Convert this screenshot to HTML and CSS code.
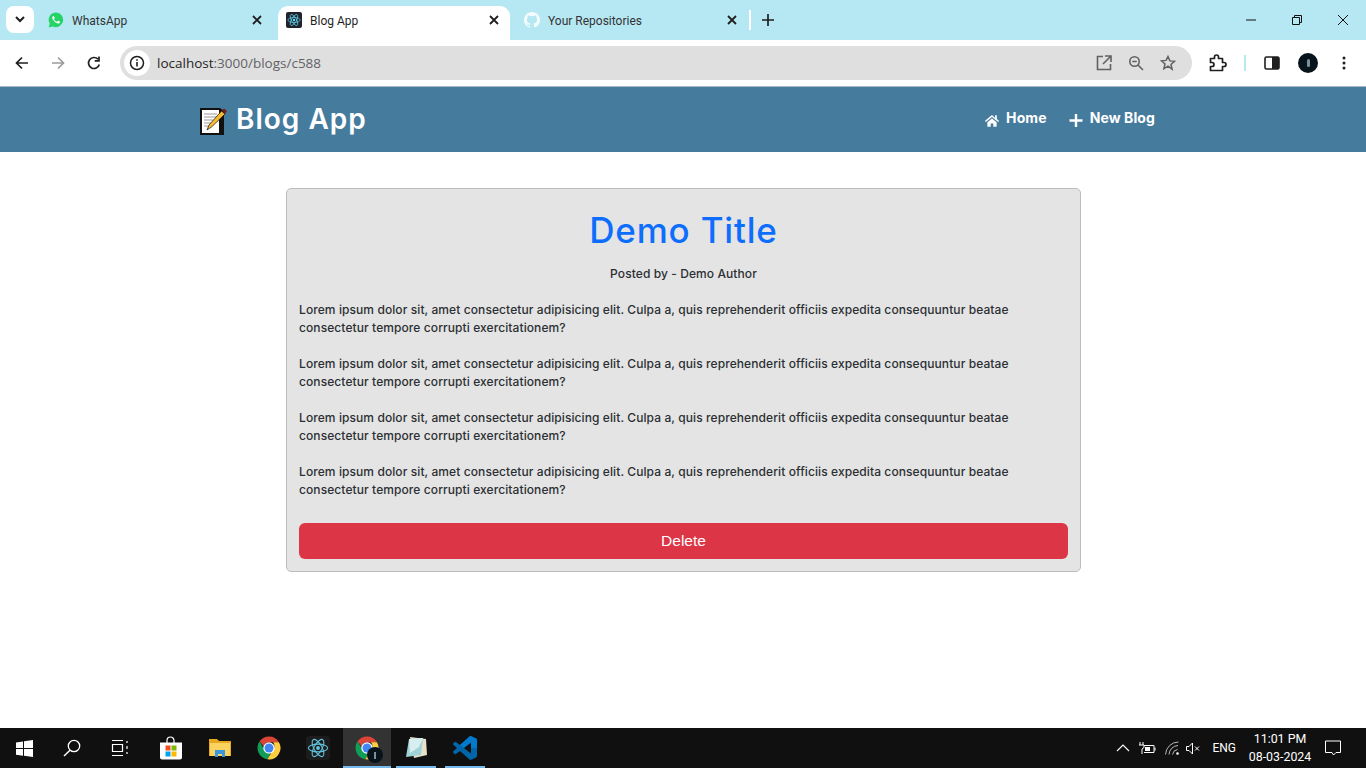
FILE: index.html
```html
<!DOCTYPE html>
<html lang="en">
<head>
    <meta charset="UTF-8">
    <title>Blog App</title>
    <link rel="stylesheet" href="styles.css">
</head>
<body>
    <svg class="defs" width="0" height="0">
        <symbol id="chrome" viewBox="0 0 48 48">
            <path fill="#db4437" d="M24 1a23 23 0 0 1 19.9 11.5H24a11.500 11.500 0 0 0-11 8L5.200 10.700A23 23 0 0 1 24 1z"/>
            <path fill="#0f9d58" d="M5.200 10.700 15.200 28a11.500 11.500 0 0 0 11.800 7.100L20.600 46.700A23 23 0 0 1 5.200 10.700z"/>
            <path fill="#ffcd40" d="M43.900 12.500A23 23 0 0 1 20.600 46.700L32 28a11.500 11.500 0 0 0 0-15.500z"/>
            <circle cx="24" cy="24" r="11.500" fill="#fff"/>
            <circle cx="24" cy="24" r="9" fill="#4285f4"/>
        </symbol>
        <symbol id="react" viewBox="0 0 48 48">
            <g fill="none" stroke="currentColor" stroke-width="2.400">
                <ellipse cx="24" cy="24" rx="21" ry="8.500"/>
                <ellipse cx="24" cy="24" rx="21" ry="8.500" transform="rotate(60 24 24)"/>
                <ellipse cx="24" cy="24" rx="21" ry="8.500" transform="rotate(120 24 24)"/>
            </g>
            <circle cx="24" cy="24" r="4.200" fill="currentColor"/>
        </symbol>
        <symbol id="close" viewBox="0 0 10 10">
            <path d="M1 1l8 8M9 1l-8 8" fill="none" stroke="currentColor" stroke-width="1.800"/>
        </symbol>
    </svg>

    <div class="tabstrip">
        <div class="tab-search">
            <svg width="10" height="7" viewBox="0 0 10 7"><path d="M1 1l4 4 4-4" fill="none" stroke="#1f1f1f" stroke-width="2"/></svg>
        </div>
        <div class="tab">
            <svg class="favicon" viewBox="0 0 16 16">
                <path fill="#25d366" d="M8 .5a7.300 7.300 0 0 0-6.300 11L.7 15.400l4-1A7.300 7.300 0 1 0 8 .5z"/>
                <path fill="#fff" d="M5.500 3.900c-.3 0-.9.300-1.100 1-.3 1 .1 2.300 1.200 3.700 1.300 1.600 2.700 2.500 4.200 2.900 1 .2 1.900-.3 2.100-1.200.1-.3.100-.6 0-.7l-1.800-.9c-.2-.1-.3 0-.4.100l-.7.900c-.1.100-.3.100-.4 0-1.100-.5-2-1.300-2.600-2.400-.1-.2 0-.3.100-.4l.5-.7v-.4l-.7-1.700c-.1-.2-.2-.2-.4-.2z"/>
            </svg>
            <span class="tab-title">WhatsApp</span>
            <svg class="tab-close"><use href="#close"/></svg>
        </div>
        <div class="tab tab-active">
            <span class="favicon react-box"><svg width="14" height="14"><use href="#react"/></svg></span>
            <span class="tab-title">Blog App</span>
            <svg class="tab-close"><use href="#close"/></svg>
        </div>
        <div class="tab tab-last">
            <svg class="favicon" viewBox="0 0 16 16">
                <path fill="#f4fbfd" d="M8 0C3.580 0 0 3.580 0 8c0 3.540 2.290 6.530 5.470 7.590.4.070.55-.17.55-.38v-1.340c-2.230.48-2.700-1.070-2.700-1.070-.36-.92-.89-1.170-.89-1.170-.73-.5.050-.49.050-.49.800.060 1.230.83 1.230.83.710 1.220 1.870.87 2.330.66.070-.52.280-.87.510-1.070-1.780-.2-3.640-.89-3.640-3.950 0-.87.310-1.590.82-2.150-.080-.2-.36-1.020.080-2.120 0 0 .67-.21 2.200.82a7.600 7.600 0 0 1 4 0c1.530-1.040 2.200-.82 2.200-.82.440 1.100.160 1.920.080 2.120.51.560.82 1.270.82 2.150 0 3.070-1.870 3.750-3.650 3.950.29.250.54.730.54 1.480v2.200c0 .21.150.46.550.38A8 8 0 0 0 16 8c0-4.420-3.580-8-8-8z"/>
            </svg>
            <span class="tab-title">Your Repositories</span>
            <svg class="tab-close"><use href="#close"/></svg>
        </div>
        <div class="tab-new">
            <svg width="12" height="12" viewBox="0 0 12 12"><path d="M6 0v12M0 6h12" fill="none" stroke="#1f1f1f" stroke-width="1.700"/></svg>
        </div>
        <div class="window-controls">
            <svg width="10" height="10" viewBox="0 0 10 10"><path d="M0 5h10" stroke="#111" fill="none"/></svg>
            <svg width="10" height="10" viewBox="0 0 10 10"><path d="M.5 2.500h7v7h-7zM2.500 2.500v-2h7v7h-2" stroke="#111" fill="none"/></svg>
            <svg width="10" height="10" viewBox="0 0 10 10"><path d="M0 0l10 10M10 0L0 10" stroke="#111" fill="none"/></svg>
        </div>
    </div>

    <div class="toolbar">
        <svg class="tool-btn" viewBox="0 0 16 16"><path d="M14 8H3M8 2.500 2.500 8 8 13.500" fill="none" stroke="#1f1f1f" stroke-width="1.700"/></svg>
        <svg class="tool-btn" viewBox="0 0 16 16"><path d="M2 8h11M8 2.500 13.500 8 8 13.500" fill="none" stroke="#9c9c9c" stroke-width="1.700"/></svg>
        <svg class="tool-btn" viewBox="0 0 16 16"><path d="M13.300 9.500A5.500 5.500 0 1 1 12 4.200M13 1.500v4.300H8.700" fill="none" stroke="#1f1f1f" stroke-width="1.700"/></svg>
        <div class="omnibox">
            <span class="site-info">
                <svg width="16" height="16" viewBox="0 0 16 16"><circle cx="8" cy="8" r="6.500" fill="none" stroke="#1f1f1f" stroke-width="1.500"/><path d="M8 7v4.500M8 4.300v1.500" stroke="#1f1f1f" stroke-width="1.600"/></svg>
            </span>
            <span class="url">localhost<span class="url-rest">:3000/blogs/c588</span></span>
            <span class="omni-actions">
                <svg width="16" height="16" viewBox="0 0 16 16"><path d="M7 1.500H1.500v13h13V9M9 1h6v6M15 1 7 9" fill="none" stroke="#616161" stroke-width="1.600"/></svg>
                <svg width="16" height="16" viewBox="0 0 16 16"><circle cx="6.500" cy="6.500" r="4.700" fill="none" stroke="#616161" stroke-width="1.600"/><path d="M10 10l5 5M4.300 6.500h4.400" stroke="#616161" stroke-width="1.600"/></svg>
                <svg width="16" height="16" viewBox="0 0 16 16"><path d="M8 1.500l1.900 4.400 4.700.4-3.600 3.100 1.100 4.700L8 11.100l-4.100 2.500L5 8.900 1.400 5.800l4.700-.4z" fill="none" stroke="#616161" stroke-width="1.500"/></svg>
            </span>
        </div>
        <svg class="ext-icon" width="18" height="18" viewBox="0 0 18 18"><path d="M1.500 4.500h4V3a2 2 0 0 1 4 0v1.500h4v4H15a2 2 0 0 1 0 4h-1.500v4h-12v-4H3a1.700 1.700 0 0 0 0-4H1.500z" fill="none" stroke="#1f1f1f" stroke-width="1.700" stroke-linejoin="round"/></svg>
        <span class="tool-sep"></span>
        <svg class="panel-icon" width="16" height="16" viewBox="0 0 16 16"><rect x="1" y="2" width="14" height="12" rx="1.500" fill="none" stroke="#1f1f1f" stroke-width="1.600"/><rect x="8" y="2" width="7" height="12" fill="#1f1f1f"/></svg>
        <span class="avatar"><span class="avatar-mark"></span></span>
        <svg class="dots" width="4" height="14" viewBox="0 0 4 14"><circle cx="2" cy="2" r="1.500"/><circle cx="2" cy="7" r="1.500"/><circle cx="2" cy="12" r="1.500"/></svg>
    </div>

    <nav class="navbar">
        <div class="brand">
            <svg width="30" height="30" viewBox="0 0 30 30">
                <path d="M2 3h20l4 3v24H2z" fill="#111"/>
                <path d="M4 5h17v23H4z" fill="#fff"/>
                <path d="M6 9h13M6 12h13M6 15h9M6 18h7M6 21h5" stroke="#9a9a9a" stroke-width="1.200"/>
                <path d="M9 25l2-5L23.500 6l3.500 3L13.500 22z" fill="#f5b932" stroke="#111" stroke-width=".7"/>
                <path d="M24 5l2-1.500 3 2.500-2 3z" fill="#7a1f1f"/>
            </svg>
            <span class="brand-name">Blog App</span>
        </div>
        <div class="nav-links">
            <a class="nav-link" href="#">
                <svg class="nav-icon" viewBox="0 0 16 14"><path fill="#fff" d="M8 .7 0 7.400l1 1.200L8 3l7 5.600 1-1.200-2.500-2V1h-2v3zM2.700 9 8 4.600 13.300 9v5H9.500v-3.500h-3V14H2.700z"/></svg>
                <span class="nav-text">Home</span>
            </a>
            <a class="nav-link" href="#">
                <svg class="nav-icon" viewBox="0 0 14 14"><path d="M7 0v14M0 7h14" stroke="#fff" stroke-width="2.600" fill="none"/></svg>
                <span class="nav-text">New Blog</span>
            </a>
        </div>
    </nav>

    <main class="page">
        <article class="card">
            <h1 class="card-title">Demo Title</h1>
            <p class="card-author">Posted by - Demo Author</p>
            <div class="card-body">
                <p>Lorem ipsum dolor sit, amet consectetur adipisicing elit. Culpa a, quis reprehenderit officiis expedita consequuntur beatae consectetur tempore corrupti exercitationem?</p>
                <p>Lorem ipsum dolor sit, amet consectetur adipisicing elit. Culpa a, quis reprehenderit officiis expedita consequuntur beatae consectetur tempore corrupti exercitationem?</p>
                <p>Lorem ipsum dolor sit, amet consectetur adipisicing elit. Culpa a, quis reprehenderit officiis expedita consequuntur beatae consectetur tempore corrupti exercitationem?</p>
                <p>Lorem ipsum dolor sit, amet consectetur adipisicing elit. Culpa a, quis reprehenderit officiis expedita consequuntur beatae consectetur tempore corrupti exercitationem?</p>
            </div>
            <button class="delete-btn">Delete</button>
        </article>
    </main>

    <footer class="taskbar">
        <div class="task-slot">
            <svg width="17" height="17" viewBox="0 0 17 17"><path fill="#fff" d="M0 2.400 7 1.400v6.700H0zM8 1.300 17 0v8.100H8zM0 9h7v6.700L0 14.700zM8 9h9v8l-9-1.300z"/></svg>
        </div>
        <div class="task-slot">
            <svg width="18" height="18" viewBox="0 0 18 18"><circle cx="11" cy="7" r="5.700" fill="none" stroke="#fff" stroke-width="1.300"/><path d="M7 11.200 1 17" stroke="#fff" stroke-width="1.500"/></svg>
        </div>
        <div class="task-slot">
            <svg width="18" height="16" viewBox="0 0 18 16"><path d="M1 .5h11M1 15.500h11M1.500 4.500h10v7h-10zM16 1v2M16 6v3M16 12v2" fill="none" stroke="#fff" stroke-width="1.200"/></svg>
        </div>
        <div class="task-slot task-first">
            <svg width="24" height="24" viewBox="0 0 24 24">
                <path d="M8 7V4.500a3.500 3.500 0 0 1 7 0V7" fill="none" stroke="#fff" stroke-width="1.200"/>
                <path d="M1 6.500h22v15a2 2 0 0 1-2 2H3a2 2 0 0 1-2-2z" fill="#fff"/>
                <rect x="6.500" y="9.500" width="5" height="5" fill="#f25022"/>
                <rect x="12.500" y="9.500" width="5" height="5" fill="#7fba00"/>
                <rect x="6.500" y="15.500" width="5" height="5" fill="#00a4ef"/>
                <rect x="12.500" y="15.500" width="5" height="5" fill="#ffb900"/>
            </svg>
        </div>
        <div class="task-slot">
            <svg width="22" height="20" viewBox="0 0 22 20">
                <path d="M0 1h8l2 2h12v15H0z" fill="#e8a820"/>
                <path d="M1 5h20v13H1z" fill="#fbd35f"/>
                <path d="M6 19v-7h10v7h-3v-3H9v3z" fill="#3a96dd"/>
            </svg>
        </div>
        <div class="task-slot"><svg width="24" height="24"><use href="#chrome"/></svg></div>
        <div class="task-slot">
            <span class="react-tile"><svg width="22" height="22"><use href="#react"/></svg></span>
        </div>
        <div class="task-slot task-active task-open">
            <svg width="24" height="24"><use href="#chrome"/></svg>
            <span class="task-badge"><span class="task-badge-mark"></span></span>
        </div>
        <div class="task-slot task-open">
            <svg width="24" height="24" viewBox="0 0 24 24">
                <path d="M6 1 22 3l1 16-13 3z" fill="#e8e3c8"/>
                <path d="M5 3 19 2l-2 17-15 2z" fill="#9fd3d8"/>
                <path d="M5 3 19 2l-4 9-9 6z" fill="#d8eef0"/>
            </svg>
        </div>
        <div class="task-slot task-open">
            <svg width="24" height="24" viewBox="0 0 24 24">
                <path fill="#0065a9" d="M23.100 2.600 18.200.2a1.500 1.500 0 0 0-1.700.3L7 9.100 2.900 6a1 1 0 0 0-1.300.1L.3 7.300a1 1 0 0 0 0 1.500L3.900 12 .3 15.200a1 1 0 0 0 0 1.500l1.300 1.200a1 1 0 0 0 1.300.1L7 14.900l9.500 8.600c.5.400 1.200.5 1.700.3l4.900-2.400c.6-.3.900-.8.900-1.400V4c0-.6-.3-1.100-.9-1.400zM18 17.500 10.800 12 18 6.500z"/>
                <path fill="#007acc" d="M16.500.5c.5-.5 1.200-.6 1.700-.3l4.900 2.400c.6.300.9.800.9 1.400V12h-6V6.500L10.800 12 7 9.100z"/>
            </svg>
        </div>
        <div class="tray">
            <svg width="14" height="8" viewBox="0 0 14 8"><path d="M1 7l6-6 6 6" fill="none" stroke="#fff" stroke-width="1.100"/></svg>
            <svg class="tray-battery" width="17" height="12" viewBox="0 0 17 12"><path d="M1 0v3M4 0v3M0 3h5v2.500L3 7v5" fill="none" stroke="#fff"/><path d="M5 3.500h10v7H5" fill="none" stroke="#fff"/><rect x="6" y="5" width="5" height="4" fill="#fff"/><path d="M16 5.500v3" stroke="#fff"/></svg>
            <svg class="tray-wifi" width="15" height="14" viewBox="0 0 15 14"><path d="M.5 13.500A13 13 0 0 1 13.500 1M4 13.500A9.500 9.500 0 0 1 13 4.500M7.500 13.500a6 6 0 0 1 5-5" fill="none" stroke="#b9b9b9"/><circle cx="12.500" cy="12.500" r="1.300" fill="#fff"/></svg>
            <svg class="tray-volume" width="14" height="13" viewBox="0 0 14 13"><path d="M.5 4.500h2.500L6.500 1v11L3 8.500H.500zM9 4.500l4 4M13 4.500l-4 4" fill="none" stroke="#fff"/></svg>
            <span class="tray-lang">ENG</span>
            <div class="clock">
                <span>11:01 PM</span>
                <span>08-03-2024</span>
            </div>
            <svg class="tray-notify" width="16" height="16" viewBox="0 0 16 16"><path d="M.5 1h15v11.500h-4.500L8.500 15 7 12.500H.5z" fill="none" stroke="#fff"/></svg>
        </div>
    </footer>
</body>
</html>
```
FILE: styles.css
```css
* {
    box-sizing: border-box;
}
html, body {
    height: 100%;
}
body {
    margin: 0;
    height: 768px;
    overflow: hidden;
    display: flex;
    flex-direction: column;
    background-color: white;
    font-family: Inter, sans-serif;
}
.defs {
    display: none;
}

/* browser chrome */
.tabstrip {
    height: 40px;
    flex-shrink: 0;
    display: flex;
    align-items: flex-end;
    background-color: #b6e8f4;
    font-family: Roboto, sans-serif;
    font-size: 12px;
    color: #333;
}
.tab-search {
    width: 28px;
    height: 27px;
    margin: 0 2px 7px 6px;
    background-color: white;
    border-radius: 8px;
    display: flex;
    align-items: center;
    justify-content: center;
}
.tab {
    width: 242px;
    height: 34px;
    display: flex;
    align-items: center;
    padding: 0 16px 6px 12px;
    border-radius: 10px 10px 0 0;
}
.tab-active {
    width: 232px;
    padding: 0 11px 6px 8px;
    background-color: white;
    color: #1f1f1f;
}
.tab-last {
    width: 241px;
    padding: 0 12px 6px 14px;
    border-right: 2px solid white;
    border-radius: 0;
    height: 20px;
    margin-bottom: 10px;
    padding-bottom: 0;
}
.favicon {
    width: 16px;
    height: 16px;
    flex-shrink: 0;
}
.react-box {
    background-color: #20232a;
    color: #61dafb;
    border-radius: 2px;
    display: flex;
    align-items: center;
    justify-content: center;
}
.tab-title {
    margin: 1px 0 0 8px;
    flex: 1;
}
.tab-close {
    width: 10px;
    height: 10px;
    flex-shrink: 0;
    color: #1f1f1f;
}
.tab-new {
    width: 34px;
    height: 34px;
    display: flex;
    align-items: center;
    justify-content: center;
    padding-bottom: 6px;
}
.window-controls {
    margin-left: auto;
    height: 40px;
    display: flex;
    align-items: center;
    gap: 36px;
    padding-right: 18px;
}
.toolbar {
    height: 46px;
    flex-shrink: 0;
    display: flex;
    align-items: center;
    padding: 0 14px;
    background-color: white;
    border-radius: 10px 10px 0 0;
}
.tool-btn {
    width: 16px;
    height: 16px;
    margin-right: 20px;
}
.omnibox {
    width: 1072px;
    height: 34px;
    margin-left: -2px;
    display: flex;
    align-items: center;
    padding: 0 16px 0 4px;
    background-color: #dfdfdf;
    border-radius: 17px;
    font-family: "Open Sans", sans-serif;
    font-size: 14px;
    color: #1f1f1f;
}
.site-info {
    width: 26px;
    height: 26px;
    background-color: white;
    border-radius: 50%;
    display: flex;
    align-items: center;
    justify-content: center;
}
.url {
    margin-left: 7px;
    font-size: 13.500px;
}
.url-rest {
    color: #5f6368;
}
.omni-actions {
    margin-left: auto;
    display: flex;
    gap: 16px;
}
.ext-icon {
    margin-left: 17px;
}
.tool-sep {
    width: 2px;
    height: 16px;
    margin-left: 17px;
    background-color: #b6e8f4;
}
.panel-icon {
    margin-left: 18px;
}
.avatar {
    width: 20px;
    height: 20px;
    margin-left: 18px;
    border-radius: 50%;
    background-color: #07141c;
    display: flex;
    align-items: center;
    justify-content: center;
}
.avatar-mark {
    width: 3px;
    height: 8px;
    border-radius: 2px;
    background-color: #7f8f9a;
}
.dots {
    margin-left: 24px;
    fill: #1f1f1f;
}

/* page */
.navbar {
    height: 66px;
    flex-shrink: 0;
    display: flex;
    align-items: center;
    padding: 0 211px 0 198px;
    background-color: #457b9d;
    border-top: 1px solid #a9bac6;
    color: white;
}
.brand {
    display: flex;
    align-items: center;
    gap: 8px;
    font-size: 28px;
    font-weight: 600;
}
.brand-name {
    letter-spacing: 1px;
    margin-bottom: 2px;
}
.nav-links {
    margin-left: auto;
    display: flex;
    gap: 22px;
}
.nav-link {
    display: flex;
    align-items: center;
    gap: 7px;
    color: white;
    font-size: 14px;
    font-weight: 700;
    text-decoration: none;
}
.nav-text {
    margin-bottom: 4px;
    letter-spacing: .1px;
}
.nav-icon {
    width: 14px;
    height: 13px;
    margin-top: 1px;
}
.page {
    flex: 1;
    padding-top: 36px;
}
.card {
    width: 795px;
    height: 384px;
    margin-left: 286px;
    padding: 0 12px;
    background-color: #e4e4e4;
    border: 1px solid #bdbdbd;
    border-radius: 5px;
}
.card-title {
    margin: 20px 0 0;
    color: #0d6efd;
    font-size: 35px;
    line-height: 42px;
    font-weight: 550;
    letter-spacing: .8px;
    text-align: center;
}
.card-author {
    margin: 14px 0 0;
    font-size: 12px;
    line-height: 18px;
    font-weight: 500;
    letter-spacing: .09px;
    text-align: center;
    color: #2b2f33;
}
.card-body {
    margin-top: 18px;
    font-size: 12px;
    line-height: 18px;
    font-weight: 500;
    letter-spacing: .09px;
    color: #2b2f33;
}
.card-body p {
    margin: 0 0 18px;
}
.delete-btn {
    width: 100%;
    height: 36px;
    margin-top: 6px;
    background-color: #dc3545;
    color: white;
    border: none;
    border-radius: 6px;
    font-family: "Liberation Sans", sans-serif;
    font-size: 15.500px;
}

/* windows taskbar */
.taskbar {
    height: 40px;
    flex-shrink: 0;
    display: flex;
    background-color: #101010;
    font-family: Roboto, sans-serif;
    font-size: 12px;
    color: white;
}
.task-slot {
    width: 48px;
    display: flex;
    align-items: center;
    justify-content: center;
    position: relative;
    margin-right: 1px;
}
.task-slot:nth-child(-n+3) {
    margin-right: 0;
}
.task-first {
    margin-left: 3px;
}
.task-open::after {
    content: "";
    position: absolute;
    left: 4px;
    right: 4px;
    bottom: 0;
    height: 2px;
    background-color: #76b9ed;
}
.task-active {
    background-color: #333;
}
.task-active::after {
    left: 0;
    right: 0;
}
.task-badge {
    position: absolute;
    left: 24px;
    top: 19px;
    width: 16px;
    height: 16px;
    border-radius: 50%;
    background-color: #07141c;
    display: flex;
    align-items: center;
    justify-content: center;
}
.task-badge-mark {
    width: 2px;
    height: 7px;
    background-color: #7f8f9a;
}
.react-tile {
    width: 24px;
    height: 24px;
    border-radius: 3px;
    background-color: #1c1c1c;
    color: #61c4de;
    display: flex;
    align-items: center;
    justify-content: center;
}
.tray {
    margin-left: auto;
    display: flex;
    align-items: center;
    padding-right: 25px;
}
.tray-battery {
    margin-left: 9px;
}
.tray-wifi {
    margin-left: 9px;
}
.tray-volume {
    margin-left: 6px;
}
.tray-lang {
    margin-left: 12px;
}
.clock {
    width: 72px;
    margin-left: 8px;
    display: flex;
    flex-direction: column;
    align-items: center;
    line-height: 18px;
    font-size: 12.400px;
}
.tray-notify {
    margin-left: 9px;
}
```
